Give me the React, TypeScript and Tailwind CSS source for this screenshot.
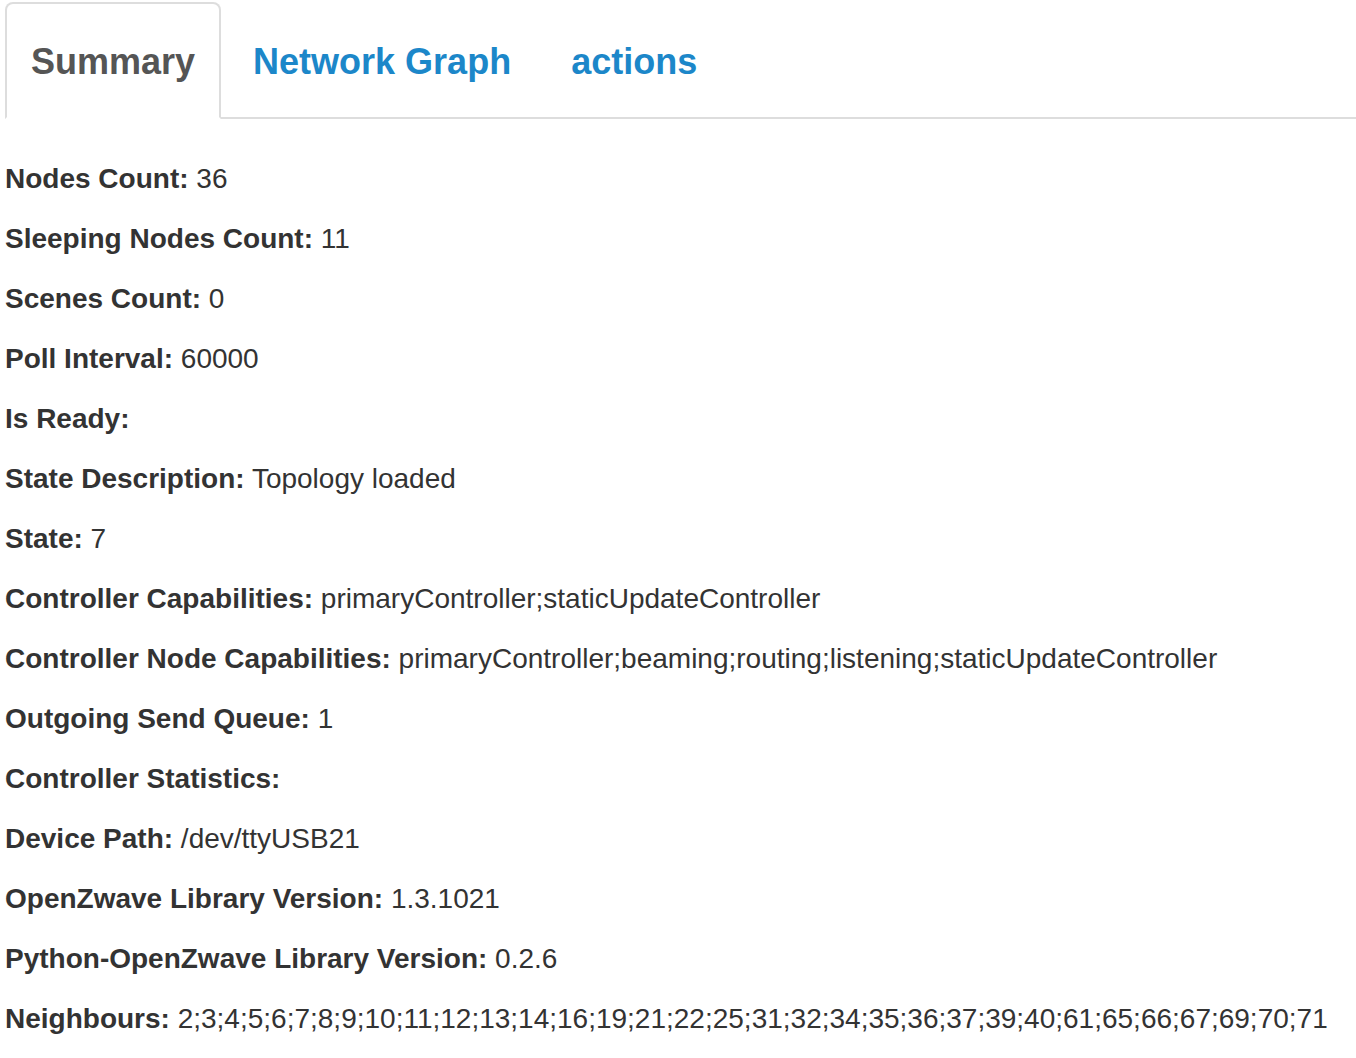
import React from "react";

const rows: [string, string][] = [
  ["Nodes Count:", "36"],
  ["Sleeping Nodes Count:", "11"],
  ["Scenes Count:", "0"],
  ["Poll Interval:", "60000"],
  ["Is Ready:", ""],
  ["State Description:", "Topology loaded"],
  ["State:", "7"],
  ["Controller Capabilities:", "primaryController;staticUpdateController"],
  ["Controller Node Capabilities:", "primaryController;beaming;routing;listening;staticUpdateController"],
  ["Outgoing Send Queue:", "1"],
  ["Controller Statistics:", ""],
  ["Device Path:", "/dev/ttyUSB21"],
  ["OpenZwave Library Version:", "1.3.1021"],
  ["Python-OpenZwave Library Version:", "0.2.6"],
  ["Neighbours:", "2;3;4;5;6;7;8;9;10;11;12;13;14;16;19;21;22;25;31;32;34;35;36;37;39;40;61;65;66;67;69;70;71"],
];

export default function App() {
  return (
    <div
      className="bg-white text-[#333] pl-[5px] pt-[2px] min-h-[1058px]"
      style={{ fontFamily: '"Liberation Sans", Arial, sans-serif' }}
    >
      <div className="flex border-b-2 border-[#ddd]">
        <div className="-mb-[2px] border-2 border-[#ddd] border-b-transparent bg-white rounded-t-[8px] px-[24px] pt-[37px] pb-[32px] text-[36px] leading-[42px] font-bold text-[#555]">
          Summary
        </div>
        <div className="ml-[4px] border-2 border-transparent px-[26px] pt-[37px] pb-[32px] text-[36px] leading-[42px] font-bold text-[#1c87c9]">
          Network Graph
        </div>
        <div className="ml-[4px] border-2 border-transparent px-[26px] pt-[37px] pb-[32px] text-[36px] leading-[42px] font-bold text-[#1c87c9]">
          actions
        </div>
      </div>
      <div className="pt-[40px]">
        {rows.map(([k, v]) => (
          <p key={k} className="text-[28px] leading-[40px] mb-[20px] whitespace-nowrap">
            <b className="font-bold">{k}</b>
            {v ? " " + v : ""}
          </p>
        ))}
      </div>
    </div>
  );
}
